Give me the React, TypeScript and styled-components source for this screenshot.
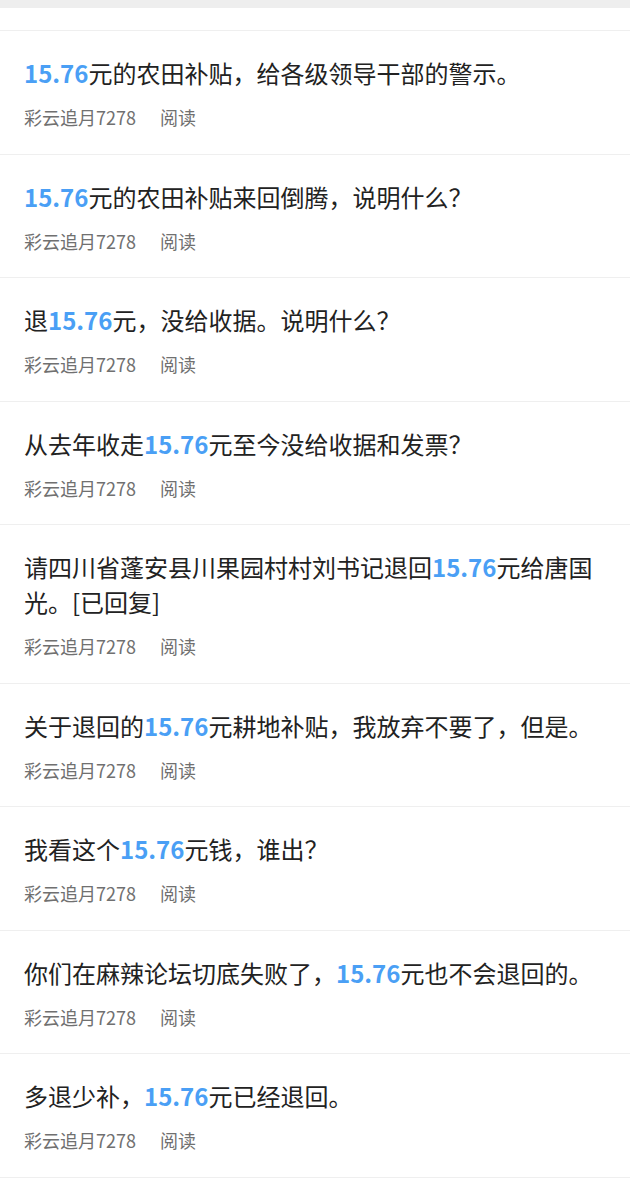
import React from "react";
import styled, { createGlobalStyle } from "styled-components";

const GlobalStyle = createGlobalStyle`
  body {
    margin: 0;
    background: #ffffff;
    font-family: "Noto Sans CJK SC", "Noto Sans", sans-serif;
  }
`;

type Part = { text: string; hl?: boolean };

const posts: Part[][] = [
  [{ text: "15.76", hl: true }, { text: "元的农田补贴，给各级领导干部的警示。" }],
  [{ text: "15.76", hl: true }, { text: "元的农田补贴来回倒腾，说明什么？" }],
  [{ text: "退" }, { text: "15.76", hl: true }, { text: "元，没给收据。说明什么？" }],
  [{ text: "从去年收走" }, { text: "15.76", hl: true }, { text: "元至今没给收据和发票？" }],
  [
    { text: "请四川省蓬安县川果园村村刘书记退回" },
    { text: "15.76", hl: true },
    { text: "元给唐国光。[已回复]" },
  ],
  [{ text: "关于退回的" }, { text: "15.76", hl: true }, { text: "元耕地补贴，我放弃不要了，但是。" }],
  [{ text: "我看这个" }, { text: "15.76", hl: true }, { text: "元钱，谁出？" }],
  [{ text: "你们在麻辣论坛切底失败了，" }, { text: "15.76", hl: true }, { text: "元也不会退回的。" }],
  [{ text: "多退少补，" }, { text: "15.76", hl: true }, { text: "元已经退回。" }],
];

const App: React.FC = () => {
  return (
    <>
      <GlobalStyle />
      <Page>
        <TopBand />
        <Spacer />
        <List>
          {posts.map((parts, i) => (
            <Item key={i}>
              <Title>
                {parts.map((p, j) =>
                  p.hl ? <Amount key={j}>{p.text}</Amount> : <span key={j}>{p.text}</span>
                )}
              </Title>
              <Meta>
                <span>彩云追月7278</span>
                <span>阅读</span>
              </Meta>
            </Item>
          ))}
        </List>
      </Page>
    </>
  );
};

const Page = styled.main`
  width: 630px;
  min-height: 1189px;
  background: #fff;
`;

const TopBand = styled.div`
  height: 8px;
  background: #eeeeee;
`;

const Spacer = styled.div`
  height: 22px;
`;

const List = styled.ul`
  list-style: none;
  margin: 0;
  padding: 0;
  border-top: 1px solid #efefef;
`;

const Item = styled.li`
  padding: 24px 24px 25.5px;
  border-bottom: 1px solid #efefef;
`;

const Title = styled.div`
  font-size: 24px;
  line-height: 35px;
  color: #222;
`;

const Amount = styled.span`
  color: #4a9ff5;
  font-weight: 700;
`;

const Meta = styled.div`
  display: flex;
  gap: 24px;
  margin-top: 16px;
  font-size: 18px;
  line-height: 22px;
  color: #707070;
`;

export default App;
